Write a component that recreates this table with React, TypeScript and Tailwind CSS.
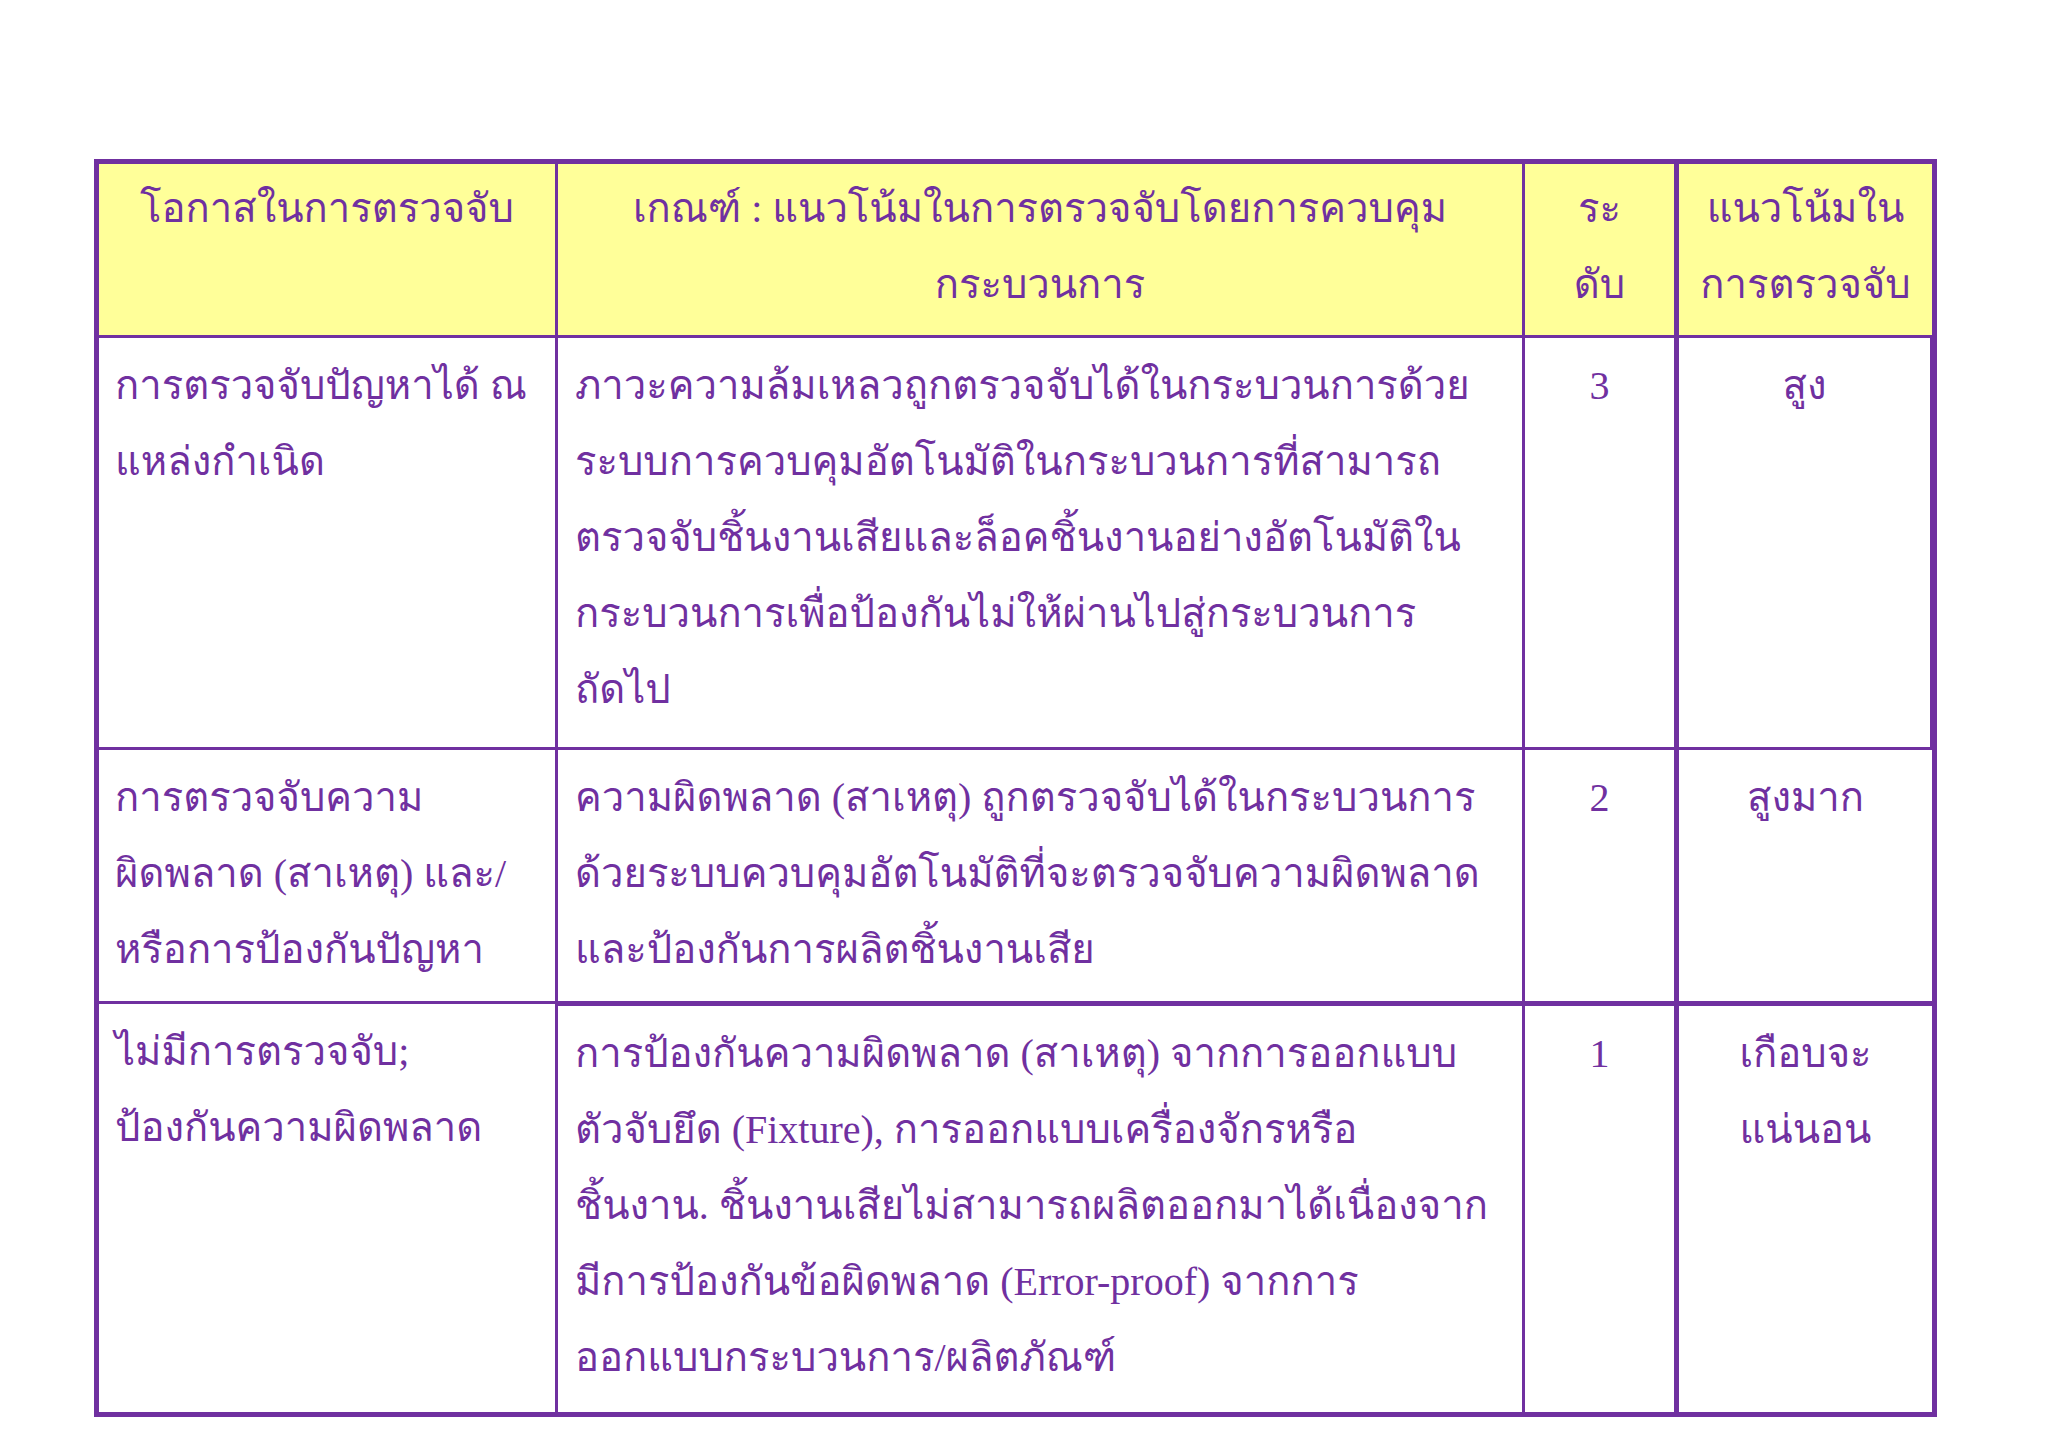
type Row = {
  chance: string[];
  criteria: string[];
  level: string;
  trend: string[];
  h: string;
};

const rows: Row[] = [
  {
    chance: ['การตรวจจับปัญหาได้ ณ', 'แหล่งกำเนิด'],
    criteria: [
      'ภาวะความล้มเหลวถูกตรวจจับได้ในกระบวนการด้วย',
      'ระบบการควบคุมอัตโนมัติในกระบวนการที่สามารถ',
      'ตรวจจับชิ้นงานเสียและล็อคชิ้นงานอย่างอัตโนมัติใน',
      'กระบวนการเพื่อป้องกันไม่ให้ผ่านไปสู่กระบวนการ',
      'ถัดไป',
    ],
    level: '3',
    trend: ['สูง'],
    h: 'h-[409px]',
  },
  {
    chance: ['การตรวจจับความ', 'ผิดพลาด (สาเหตุ) และ/', 'หรือการป้องกันปัญหา'],
    criteria: [
      'ความผิดพลาด (สาเหตุ) ถูกตรวจจับได้ในกระบวนการ',
      'ด้วยระบบควบคุมอัตโนมัติที่จะตรวจจับความผิดพลาด',
      'และป้องกันการผลิตชิ้นงานเสีย',
    ],
    level: '2',
    trend: ['สูงมาก'],
    h: 'h-[251px]',
  },
  {
    chance: ['ไม่มีการตรวจจับ;', 'ป้องกันความผิดพลาด'],
    criteria: [
      'การป้องกันความผิดพลาด (สาเหตุ) จากการออกแบบ',
      'ตัวจับยึด (Fixture), การออกแบบเครื่องจักรหรือ',
      'ชิ้นงาน. ชิ้นงานเสียไม่สามารถผลิตออกมาได้เนื่องจาก',
      'มีการป้องกันข้อผิดพลาด (Error-proof) จากการ',
      'ออกแบบกระบวนการ/ผลิตภัณฑ์',
    ],
    level: '1',
    trend: ['เกือบจะ', 'แน่นอน'],
    h: 'h-[408px]',
  },
];

function Lines({ lines }: { lines: string[] }) {
  return (
    <>
      {lines.map((l, i) => (
        <div key={i} className="whitespace-nowrap">{l}</div>
      ))}
    </>
  );
}

export default function App() {
  return (
    <div className="min-h-[1448px] bg-white pl-[94px] pt-[159px] font-[family-name:'Liberation_Serif','Loma','Noto_Sans_Thai_Looped',serif] text-[40px] leading-[76px] text-[#7030a0]">
      <div className="grid w-[1843px] grid-cols-[456px_964px_149px_255px] gap-[3px] bg-[#7030a0] p-[5px]">
        {/* header */}
        <div className="h-[171px] bg-[#ffff99] pt-[7px] text-center">
          <Lines lines={['โอกาสในการตรวจจับ']} />
        </div>
        <div className="bg-[#ffff99] pt-[7px] text-center">
          <Lines lines={['เกณฑ์ : แนวโน้มในการตรวจจับโดยการควบคุม', 'กระบวนการ']} />
        </div>
        <div className="bg-[#ffff99] pt-[7px] text-center">
          <Lines lines={['ระ', 'ดับ']} />
        </div>
        <div className="border-l-2 border-[#7030a0] bg-[#ffff99] pt-[7px] text-center">
          <Lines lines={['แนวโน้มใน', 'การตรวจจับ']} />
        </div>

        {rows.map((r, i) => (
          <div key={i} className="contents">
            <div className={`${r.h} bg-white pl-[16px] pt-[10px]`}>
              <Lines lines={r.chance} />
            </div>
            <div className={`bg-white pl-[17px] pt-[10px] ${i === 2 ? 'border-t-2 border-[#7030a0]' : ''}`}>
              <Lines lines={r.criteria} />
            </div>
            <div className={`bg-white pt-[10px] text-center ${i === 2 ? 'border-t-2 border-[#7030a0]' : ''}`}>
              {r.level}
            </div>
            <div
              className={`border-l-2 border-[#7030a0] bg-white pt-[10px] text-center ${i === 2 ? 'border-t-2' : ''} ${i === 0 ? 'border-r-2' : ''}`}
            >
              <Lines lines={r.trend} />
            </div>
          </div>
        ))}
      </div>
    </div>
  );
}
